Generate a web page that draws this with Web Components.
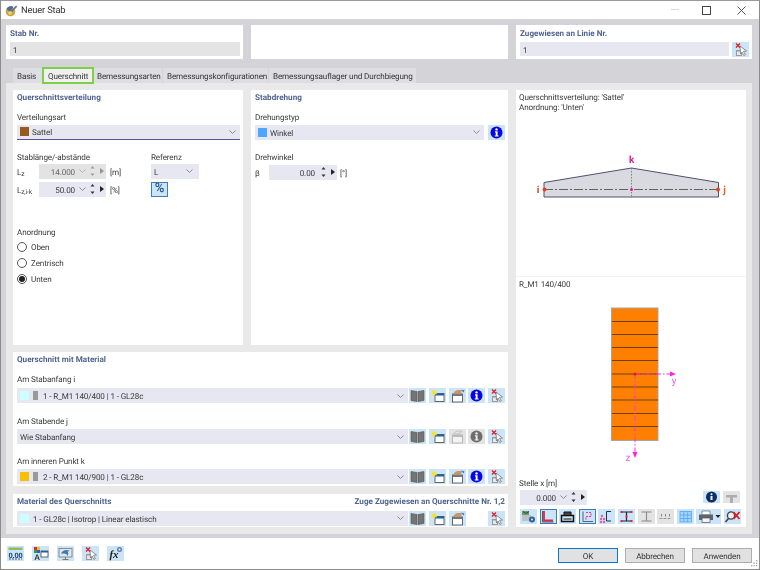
<!DOCTYPE html>
<html lang="de"><head><meta charset="utf-8"><title>Neuer Stab</title>
<style>
html,body{margin:0;padding:0;background:#fff}
body{font:8.1px/10px Roboto,"Noto Sans",sans-serif;letter-spacing:-.12px;text-rendering:geometricPrecision;color:#3a3a3a;width:760px;height:570px;overflow:hidden}
.cols{display:grid;grid-template-columns:134px 48px}
.line{display:flex;align-items:center;gap:4px;height:15px}
.line b{font-weight:400;width:18px;flex:none;white-space:nowrap;padding-top:1px}
.line>span{padding-top:1px}
sub{font-size:6.5px;line-height:0;vertical-align:-1px}
.swap{display:flex;gap:3px}
.swap rf-select{flex:1;min-width:0}
</style></head>
<body>
<rf-window>
  <rf-titlebar slot="title">Neuer Stab</rf-titlebar>

  <rf-panel slot="top" heading="Stab Nr." style="--pad:3px 3px 0 4px">
    <rf-field gray style="margin-top:4px">1</rf-field>
  </rf-panel>
  <rf-panel slot="top"></rf-panel>
  <rf-panel slot="top" heading="Zugewiesen an Linie Nr." style="--pad:3px 3px 0 4px">
    <div class="swap" style="margin-top:4px"><rf-field style="flex:1">1</rf-field><rf-icon name="pick"></rf-icon></div>
  </rf-panel>

  <rf-tab slot="tabs" style="width:29px;padding-left:4px">Basis</rf-tab>
  <rf-tab slot="tabs" active style="width:50px;padding-left:5px">Querschnitt</rf-tab>
  <rf-tab slot="tabs" style="width:68px;padding-left:3px">Bemessungsarten</rf-tab>
  <rf-tab slot="tabs" style="width:105px;padding-left:4px">Bemessungskonfigurationen</rf-tab>
  <rf-tab slot="tabs" style="width:147px;padding-left:4px">Bemessungsauflager und Durchbiegung</rf-tab>

  <rf-panel slot="a" heading="Querschnittsverteilung" style="--pad:2px 3px 0 4px">
    <rf-label style="margin-top:10px">Verteilungsart</rf-label>
    <rf-select underline style="margin-top:3px"><rf-swatch color="#96591f"></rf-swatch><span style="margin-left:3px">Sattel</span></rf-select>
    <div class="cols" style="margin-top:12px">
      <div>
        <rf-label>Stablänge/-abstände</rf-label>
        <div class="line" style="margin-top:2px"><b>L<sub>z</sub></b><rf-spin value="14.000" chevron disabled style="width:67px"></rf-spin><span>[m]</span></div>
        <div class="line" style="margin-top:3px"><b>L<sub>z,i-k</sub></b><rf-spin value="50.00" chevron style="width:67px"></rf-spin><span>[%]</span></div>
      </div>
      <div>
        <rf-label>Referenz</rf-label>
        <rf-select style="margin-top:2px;--chev:6px"><span>L</span></rf-select>
        <rf-percent style="margin-top:3px">%</rf-percent>
      </div>
    </div>
    <rf-label style="margin-top:30px">Anordnung</rf-label>
    <rf-radio style="margin-top:5px">Oben</rf-radio>
    <rf-radio style="margin-top:6px">Zentrisch</rf-radio>
    <rf-radio checked style="margin-top:6px">Unten</rf-radio>
  </rf-panel>

  <rf-panel slot="b" heading="Stabdrehung" style="--pad:2px 3px 0 4px">
    <rf-label style="margin-top:10px">Drehungstyp</rf-label>
    <div class="swap" style="margin-top:3px"><rf-select><rf-swatch color="#4ea5ff"></rf-swatch><span style="margin-left:3px">Winkel</span></rf-select><rf-icon name="info" style="margin-left:1px"></rf-icon></div>
    <rf-label style="margin-top:12px">Drehwinkel</rf-label>
    <div class="line" style="margin-top:3px;gap:0"><b style="width:14px">β</b><rf-spin value="0.00" style="width:68px"></rf-spin><span style="margin-left:3px">[°]</span></div>
  </rf-panel>

  <rf-panel slot="c" heading="Querschnitt mit Material" style="--pad:2px 3px 0 4px">
    <rf-label style="margin-top:10px">Am Stabanfang i</rf-label>
    <rf-sel-row style="margin-top:4px">
      <rf-swatch color="#ccffff"></rf-swatch><rf-swatch color="#9a9a9a" style="--w:5px;margin-left:4px"></rf-swatch><span style="margin-left:5px">1 - R_M1 140/400 | 1 - GL28c</span>
      <rf-icon slot="acts" name="book"></rf-icon><rf-icon slot="acts" name="new"></rf-icon><rf-icon slot="acts" name="edit"></rf-icon><rf-icon slot="acts" name="info"></rf-icon><rf-icon slot="acts" name="pick"></rf-icon>
    </rf-sel-row>
    <rf-label style="margin-top:13px">Am Stabende j</rf-label>
    <rf-sel-row style="margin-top:3px">
      <span>Wie Stabanfang</span>
      <rf-icon slot="acts" name="book"></rf-icon><rf-icon slot="acts" name="new"></rf-icon><rf-icon slot="acts" name="editoff" gray></rf-icon><rf-icon slot="acts" name="infooff" gray></rf-icon><rf-icon slot="acts" name="pick"></rf-icon>
    </rf-sel-row>
    <rf-label style="margin-top:12px">Am inneren Punkt k</rf-label>
    <rf-sel-row style="margin-top:3px">
      <rf-swatch color="#f8c000"></rf-swatch><rf-swatch color="#9a9a9a" style="--w:5px;margin-left:4px"></rf-swatch><span style="margin-left:5px">2 - R_M1 140/900 | 1 - GL28c</span>
      <rf-icon slot="acts" name="book"></rf-icon><rf-icon slot="acts" name="new"></rf-icon><rf-icon slot="acts" name="edit"></rf-icon><rf-icon slot="acts" name="info"></rf-icon><rf-icon slot="acts" name="pick"></rf-icon>
    </rf-sel-row>
  </rf-panel>

  <rf-panel slot="d" heading="Material des Querschnitts" note="Zuge Zugewiesen an Querschnitte Nr. 1,2" style="--pad:2px 3px 0 4px">
    <rf-sel-row style="margin-top:5px">
      <rf-swatch color="#ccffff"></rf-swatch><span style="margin-left:4px">1 - GL28c | Isotrop | Linear elastisch</span>
      <rf-icon slot="acts" name="book"></rf-icon><rf-icon slot="acts" name="new"></rf-icon><rf-icon slot="acts" name="edit"></rf-icon><rf-icon slot="acts" name="blank" clear></rf-icon><rf-icon slot="acts" name="pick"></rf-icon>
    </rf-sel-row>
  </rf-panel>

  <rf-preview slot="e"></rf-preview>

  <rf-icon slot="foot" name="zero"></rf-icon>
  <rf-icon slot="foot" name="colors"></rf-icon>
  <rf-icon slot="foot" name="monitor"></rf-icon>
  <rf-icon slot="foot" name="pick"></rf-icon>
  <rf-icon slot="foot" name="fx"></rf-icon>
  <rf-button slot="btn" primary>OK</rf-button>
  <rf-button slot="btn">Abbrechen</rf-button>
  <rf-button slot="btn">Anwenden</rf-button>
</rf-window>

<script>
const ICONS={
 pick:'<path d="M4 8h6v6H4z" fill="#9a9a9a"/><path d="M5 9.500h4V13H5z" fill="#e8e8e8"/><path d="M8 4l6.500 5-3 .3 1.800 3.400-1.500.8-1.700-3.400L8.500 12z" fill="#fff" stroke="#666" stroke-width=".7"/><path d="M4 1.500l4 4M8 1.500l-4 4" stroke="#e0202c" stroke-width="1.400"/>',
 info:'<circle cx="8.500" cy="7.500" r="6" fill="#0505e6"/><circle cx="8.500" cy="4.400" r="1.200" fill="#fff"/><path d="M7 6.300h2.600v4.200h1v1.100H6.700v-1.100h1V7.400H7z" fill="#fff"/>',
 infooff:'<circle cx="8.500" cy="7.500" r="6" fill="#6e6e6e"/><circle cx="8.500" cy="4.400" r="1.200" fill="#eee"/><path d="M7 6.300h2.600v4.200h1v1.100H6.700v-1.100h1V7.400H7z" fill="#eee"/>',
 book:'<path d="M2 2.500l6 1v10l-6-1z" fill="#747474" stroke="#555" stroke-width=".6"/><path d="M15 2.500l-6 1v10l6-1z" fill="#747474" stroke="#555" stroke-width=".6"/><path d="M8.500 3.500v10" stroke="#a8a8a8" stroke-width=".7"/>',
 new:'<rect x="6" y="5.500" width="9" height="8" fill="#fff" stroke="#444" stroke-width=".8"/><rect x="6" y="5.500" width="9" height="2" fill="#1f5f9e"/><path d="M4.500.8l1 2.200 2.300-.6-1 2.100 1.600 1.700-2.400.1-.9 2.200-1-2.200-2.400-.1 1.700-1.700-1-2.100 2.300.6z" fill="#f7e32a"/>',
 edit:'<rect x="3.500" y="6" width="10" height="8" fill="#fff" stroke="#444" stroke-width=".8"/><rect x="3.500" y="6" width="10" height="2" fill="#777"/><path d="M4.500 5.500c.5-2 2.500-3.500 5-3.500h3v2.500l-2.500 1.500h-4z" fill="#c89468"/><path d="M12 1.500l3.500 1-1 2z" fill="#2f78c8"/>',
 editoff:'<rect x="3.500" y="6" width="10" height="8" fill="#f4f4f4" stroke="#aaa" stroke-width=".8"/><rect x="3.500" y="6" width="10" height="2" fill="#bbb"/><path d="M4.500 5c1-2 3-3 5-3h3l-1 2-3 1z" fill="none" stroke="#bbb" stroke-width=".8"/>',
 blank:'',
 zero:'<rect x="1.500" y="1.500" width="14" height="2.500" fill="#8dbd5c"/><text x="8.500" y="11.500" font-family="Liberation Sans" font-size="7.500" font-weight="700" fill="#1a3d6b" text-anchor="middle">0.00</text><path d="M2 13h13" stroke="#1a3d6b" stroke-width=".8" stroke-dasharray="2 1"/>',
 colors:'<rect x="2" y="1" width="3" height="3" fill="#d92b2b"/><rect x="5" y="1" width="3" height="3" fill="#e9c31f"/><rect x="2" y="4" width="3" height="3" fill="#3a9b3a"/><rect x="5" y="4" width="3" height="3" fill="#2c5fc4"/><text x="5" y="14" font-family="Liberation Sans" font-size="8" font-weight="700" fill="#333" text-anchor="middle">A</text><rect x="9" y="5" width="7" height="6" fill="#fff" stroke="#345" stroke-width=".8"/><rect x="9" y="5" width="7" height="1.500" fill="#1f5f9e"/>',
 monitor:'<rect x="2" y="2.500" width="13" height="8.500" fill="#dfe7ee" stroke="#777" stroke-width=".8"/><path d="M5.500 13.500h6M8.500 11v2.500" stroke="#777"/><path d="M4 8c1-4 6-5 9-3l-2.500.5c1 1 1 3 0 4.500-.5-2-2.500-3-6.500-2z" fill="#3a7cb8"/>',
 fx:'<text x="7" y="12" font-family="Liberation Serif" font-size="11" font-style="italic" font-weight="700" fill="#222" text-anchor="middle">fx</text><circle cx="12.500" cy="3.500" r="2.500" fill="#5b7fb8"/><circle cx="12.500" cy="3.500" r="1" fill="#fff"/>',
 model:'<path d="M2 2h7v4H2z" fill="#6a9b62"/><path d="M2 6h9v6H2z" fill="#bcc2c9"/><path d="M3 2.500l3 2 3-2" stroke="#38503a" fill="none"/><circle cx="12" cy="10.500" r="3" fill="#2e5f96"/><circle cx="12" cy="10.500" r="1" fill="#cfe"/>',
 lred:'<path d="M4 2v9.500h9" fill="none" stroke="#e2254a" stroke-width="1.800"/><path d="M2.500 2v11h11" fill="none" stroke="#334" stroke-width=".8"/>',
 tray:'<path d="M2.500 6.500h12v6h-12z" fill="none" stroke="#111" stroke-width="1.500"/><path d="M5 6V3h7v3" fill="#444" stroke="#111"/><path d="M4.500 10h8" stroke="#111"/>',
 printer:'<path d="M6 2h8v4H6z" fill="#fff" stroke="#666" stroke-width=".7"/><path d="M3 5.500h14v5.500H3z" fill="#5d6670"/><path d="M6 9h8v4.500H6z" fill="#f4f4f4" stroke="#555" stroke-width=".7"/><path d="M19.500 6h5l-2.500 3z" fill="#222"/>',
 ldash:'<path d="M4 2.500v10h10" fill="none" stroke="#345" stroke-width=".8"/><path d="M7 3.500h5v4H7v4" fill="none" stroke="#e83a90" stroke-width="1.100" stroke-dasharray="2 1"/>',
 dots:'<path d="M13 2.500H8.500v9.500H13" fill="none" stroke="#234" stroke-width="1"/><g fill="#e060a0"><circle cx="4" cy="7" r="1.200"/><circle cx="3" cy="10" r="1.200"/><circle cx="6" cy="10" r="1.200"/><circle cx="3" cy="13" r="1.200"/><circle cx="6" cy="13" r="1.200"/></g>',
 ibeam:'<path d="M3.500 3h10M3.500 12h10M8.500 3v9" stroke="#223" stroke-width="1.200"/><g fill="#e2254a"><rect x="2.500" y="2" width="2" height="2"/><rect x="12.500" y="2" width="2" height="2"/><rect x="2.500" y="11" width="2" height="2"/><rect x="12.500" y="11" width="2" height="2"/><rect x="7.500" y="6.500" width="2" height="2"/></g>',
 ibeamoff:'<path d="M3.500 3h10M3.500 12h10M8.500 3v9" stroke="#8a8a8a" stroke-width="1.100"/>',
 dotsoff:'<path d="M2.500 9.500h12" stroke="#999" stroke-width="1.100" stroke-dasharray="3 1"/><g fill="#888"><rect x="4" y="5" width="1" height="2.500"/><rect x="8" y="5" width="1" height="2.500"/><rect x="12" y="5" width="1" height="2.500"/></g>',
 grid:'<rect x="3" y="2.500" width="11.500" height="10.500" fill="#a8d5fb" stroke="#4ea5ff" stroke-width=".8"/><path d="M3 6h11.500M3 9.500h11.500M6.800 2.500V13M10.700 2.500V13" stroke="#4ea5ff" stroke-width=".8"/>',
 search:'<circle cx="7" cy="6.500" r="3.600" fill="#e8f0f8" stroke="#444" stroke-width="1.300"/><path d="M4.500 9.500l-3 3.500" stroke="#444" stroke-width="1.600"/><path d="M9.500 3l6 7M15.500 3l-6 7" stroke="#e21c1c" stroke-width="1.800"/>',
 nail:'<path d="M3 4h11v2.500H10V13H7V6.500H3z" fill="#adadad"/>',
 iblack:'<circle cx="8.500" cy="6" r="5.500" fill="#0d2f66"/><circle cx="8.500" cy="3.300" r="1" fill="#fff"/><path d="M7.500 5h2v4h-2z" fill="#fff"/>'
};
function def(tag,render){
  customElements.define(tag,class extends HTMLElement{
    connectedCallback(){
      if(this.shadowRoot)return;
      this.attachShadow({mode:'open'}).innerHTML=render(this);
    }
  });
}
const chev='<svg width="7" height="4" viewBox="0 0 7 4"><path d="M.5.5l3 3 3-3" fill="none" stroke="#808088" stroke-width=".9"/></svg>';

def('rf-window',()=>`<style>
:host{display:flex;flex-direction:column;width:760px;height:570px;box-sizing:border-box;border:1px solid #8c8c8c;border-top-color:#9a9a9a;background:#fff;filter:blur(.3px)}
.body{flex:1;min-height:0;background:#d3d3d8;padding:6px 7px 0 5px;display:flex;flex-direction:column}
.top{display:grid;grid-template-columns:237px 257px 236px;column-gap:8px;height:34px}
.tabs{display:flex;gap:1px;margin-top:8.500px;height:15px;padding-left:7px;align-items:stretch}
.band{background:#e9e9e9;height:451px;box-sizing:border-box;padding:7px 6px 6px 7px;display:grid;grid-template-columns:230px 257px 230px;grid-template-rows:255px 134px 33px;gap:7.500px 8px}
.a{grid-area:1/1}.b{grid-area:1/2}.c{grid-area:2/1/3/3}.d{grid-area:3/1/4/3}.e{grid-area:1/3/4/4}
::slotted(*){min-width:0}
.foot{height:29px;flex:none;display:flex;align-items:center;padding:0 7px 2px 6px;position:relative}
.fi{display:flex;gap:8px;margin-top:1px}
.fb{display:flex;gap:7px;margin-left:auto;margin-top:5px}
.grip{position:absolute;right:1px;bottom:1px}
</style>
<slot name="title"></slot>
<div class="body">
 <div class="top"><slot name="top"></slot></div>
 <div class="tabs"><slot name="tabs"></slot></div>
 <div class="band">
  <div class="a" style="display:grid"><slot name="a"></slot></div>
  <div class="b" style="display:grid"><slot name="b"></slot></div>
  <div class="c" style="display:grid"><slot name="c"></slot></div>
  <div class="d" style="display:grid"><slot name="d"></slot></div>
  <div class="e" style="display:grid"><slot name="e"></slot></div>
 </div>
</div>
<div class="foot"><div class="fi"><slot name="foot"></slot></div><div class="fb"><slot name="btn"></slot></div>
<svg class="grip" width="9" height="9" viewBox="0 0 9 9" fill="#a8a8a8"><rect x="7" y="1" width="1.300" height="1.300"/><rect x="4.500" y="3.500" width="1.300" height="1.300"/><rect x="7" y="3.500" width="1.300" height="1.300"/><rect x="2" y="6" width="1.300" height="1.300"/><rect x="4.500" y="6" width="1.300" height="1.300"/><rect x="7" y="6" width="1.300" height="1.300"/></svg>
</div>`);

def('rf-titlebar',()=>`<style>
:host{display:flex;align-items:center;height:18px;flex:none;background:#fff;font-size:9.300px;letter-spacing:-.15px;color:#333;padding-left:4px}
.t{margin-left:3px;padding-top:2px}
.w{margin-left:auto;display:flex;align-items:center}
.w svg{display:block}
</style>
<svg width="13" height="13" viewBox="0 0 13 13"><circle cx="5.500" cy="7.500" r="4.800" fill="#c9a640"/><path d="M1.500 5a4.800 4.800 0 0 1 7-2.200L5 8z" fill="#4d6f96"/><path d="M6 7l5-5.500 1.200 1.200L7 8z" fill="#5b6f8c"/><circle cx="5" cy="9" r="1.800" fill="#e8d78a"/></svg>
<span class="t"><slot></slot></span>
<span class="w">
<svg width="8" height="2" style="margin-right:23px"><rect width="8" height="1" fill="#d8d8d8"/></svg>
<svg width="9" height="9" style="margin-right:26px"><rect x=".5" y=".5" width="8" height="8" fill="none" stroke="#444"/></svg>
<svg width="9" height="9" style="margin-right:13px"><path d="M.5.5l8 8M8.500.5l-8 8" stroke="#444" fill="none" stroke-width=".9"/></svg>
</span>`);

def('rf-panel',h=>{
 const hd=h.getAttribute('heading'),n=h.getAttribute('note');
 return `<style>
:host{display:block;background:#fff;box-sizing:border-box;padding:var(--pad,0);min-width:0}
.h{display:flex;justify-content:space-between;font-weight:700;letter-spacing:.02px;color:#4f6490;height:10px;line-height:10px;white-space:nowrap}
</style>${hd?`<div class="h"><span>${hd}</span>${n?`<span>${n}</span>`:''}</div>`:''}<slot></slot>`;
});

def('rf-label',()=>`<style>:host{display:block;height:10px;line-height:10px;white-space:nowrap}</style><slot></slot>`);

def('rf-field',h=>`<style>:host{display:block;height:14px;line-height:16px;box-sizing:border-box;padding-left:3px;background:${h.hasAttribute('gray')?'#e4e4e4':'#e6e7f1'}}</style><slot></slot>`);

def('rf-tab',h=>`<style>
:host{display:flex;align-items:center;white-space:nowrap;box-sizing:border-box;padding-top:2.500px;background:#dedee2;color:#333;${h.hasAttribute('active')?'background:#f0f0f0;outline:2px solid #7ed04b;outline-offset:-1px;z-index:1;':''}}
</style><slot></slot>`);

def('rf-select',h=>`<style>
:host{display:flex;align-items:center;height:15px;box-sizing:border-box;background:#e6e7f1;padding:1px var(--chev,4px) 0 3px;white-space:nowrap;min-width:0;${h.hasAttribute('underline')?'border-bottom:1px solid #55559a;':''}}
.c{margin-left:auto;display:flex;align-items:center;margin-top:-1px}
</style><slot></slot><span class="c">${chev}</span>`);

def('rf-sel-row',()=>`<style>
:host{display:flex;height:15px}
rf-select{flex:1;min-width:0}
.a{display:flex;gap:2.750px;margin-left:1.500px}
</style><rf-select><slot></slot></rf-select><span class="a"><slot name="acts"></slot></span>`);

def('rf-swatch',h=>`<style>:host{display:inline-block;flex:none;margin-top:-1px;width:var(--w,9px);height:9px;background:${h.getAttribute('color')}}</style>`);

def('rf-spin',h=>{
 const d=h.hasAttribute('disabled'),c=h.hasAttribute('chevron');
 return `<style>
:host{display:flex;align-items:center;height:15px;flex:none;background:${d?'#e3e3e3':'#e6e7f1'};color:${d?'#666':'#3a3a3a'};box-sizing:border-box}
.v{flex:1;text-align:right;padding-top:1px}
.c{margin-left:4px;display:flex;opacity:${d?.55:1}}
svg{display:block}
</style><span class="v">${h.getAttribute('value')}</span>${c?`<span class="c">${chev}</span>`:''}
<svg style="margin:0 5px 0 ${c?4:6}px;opacity:${d?.4:1}" width="5" height="10" viewBox="0 0 5 10" fill="#333"><path d="M2.500 0l2 2.500h-4zM2.500 10l2-2.500h-4z"/></svg>
<svg style="margin-right:2px;opacity:${d?.4:1}" width="4" height="6" viewBox="0 0 4 6" fill="#222"><path d="M0 0l4 3-4 3z"/></svg>`;
});

def('rf-percent',()=>`<style>:host{display:flex;align-items:center;justify-content:center;width:17px;height:15px;box-sizing:border-box;background:#cce4f7;border:1px solid #3b7db8;color:#1d5488;font-weight:500;font-size:13px}</style><slot></slot>`);

def('rf-radio',h=>`<style>
:host{display:flex;align-items:center;gap:4px;height:10px;line-height:10px}
i{width:10px;height:10px;box-sizing:border-box;border-radius:50%;border:1px solid #555;background:#fff;display:flex;align-items:center;justify-content:center;flex:none}
b{width:6px;height:6px;border-radius:50%;background:#222}
.x{padding-top:1.500px}
</style><i>${h.hasAttribute('checked')?'<b></b>':''}</i><span class="x"><slot></slot></span>`);

def('rf-icon',h=>{
 const g=h.hasAttribute('gray'),c=h.hasAttribute('clear'),br=h.hasAttribute('framed'),w=h.getAttribute('w')||17;
 return `<style>
:host{display:inline-block;flex:none;width:${w}px;height:15px;box-sizing:border-box;overflow:hidden;background:${c?'transparent':g?'#e3e3e3':'#cce4f7'};${br?'outline:1px solid #3b7db8;outline-offset:-1px;':''}}
svg{display:block}
</style><svg width="${w}" height="15" viewBox="0 0 ${w} 15">${ICONS[h.getAttribute('name')]||''}</svg>`;
});

def('rf-button',h=>`<style>
:host{display:flex;align-items:center;justify-content:center;width:60px;height:15px;box-sizing:border-box;padding-top:1px;background:#e1e1e1;border:1px solid ${h.hasAttribute('primary')?'#0078d7':'#adadad'};color:#333}
</style><slot></slot>`);

def('rf-preview',()=>`<style>
:host{display:flex;flex-direction:column;background:#fff;box-sizing:border-box;padding:2px 3px 0 3px;min-height:0}
.t{height:10px;line-height:10px;white-space:nowrap}
svg{display:block}
.d1{margin:0 -3px;flex:none}
.d2{margin:0 -3px;flex:none;border-top:1px solid #f3f3f3}
.r{display:flex;align-items:center;height:15px;padding-left:1px}
.tb{display:flex;gap:2.600px;height:15px;margin-top:4.500px;padding-left:1px}
.ib{display:flex;gap:3px;margin-left:auto;margin-right:3px;align-items:center}
.ib rf-icon{height:12px}
</style>
<div class="t">Querschnittsverteilung: 'Sattel'</div>
<div class="t">Anordnung: 'Unten'</div>
<svg class="d1" width="230" height="164" viewBox="516 112 230 164" font-family="Roboto" font-weight="700" font-size="10">
 <path d="M544 182.500L631.500 168l87 14.500V197H544z" fill="#d9d9e0" stroke="#50506e" stroke-width="1"/>
 <path d="M544 189.500h175" stroke="#555" stroke-width=".9" stroke-dasharray="9 2 2 2"/>
 <path d="M631.500 168v29" stroke="#777" stroke-width=".9" stroke-dasharray="1.500 1.500"/>
 <circle cx="544.500" cy="189.500" r="1.900" fill="#e0401a"/><circle cx="718" cy="189.500" r="1.900" fill="#e0401a"/><circle cx="631.500" cy="189.500" r="1.500" fill="#e8188a"/>
 <text x="631.500" y="163" text-anchor="middle" fill="#e8188a">k</text>
 <text x="538" y="193" text-anchor="middle" fill="#e0401a">i</text>
 <text x="724.500" y="193" text-anchor="middle" fill="#e0601a">j</text>
</svg>
<div class="d2"></div>
<div class="t" style="margin-top:2px">R_M1 140/400</div>
<svg class="d1" width="230" height="176" viewBox="516 288 230 176" font-family="Roboto" font-size="10">
 <rect x="611.500" y="307" width="46.500" height="132.500" fill="#ff8000" stroke="#a5a5a5"/>
 <path d="M612 320.500h46M612 333.500h46M612 346.500h46M612 359.500h46M612 373h46M612 386h46M612 399h46M612 412.500h46M612 425.500h46" stroke="#6e3d10"/>
 <path d="M635 373h36M635 373v81" stroke="#ff30e0" stroke-width="1" stroke-dasharray="5 2 1.500 2"/>
 <path d="M670 370.500l6 2.500-6 2.500zM632.500 451l2.500 6 2.500-6z" fill="#ff20e0"/>
 <circle cx="635" cy="373" r="1.500" fill="#f01020"/>
 <text x="674" y="383" text-anchor="middle" fill="#f060e0">y</text>
 <text x="628" y="460" text-anchor="middle" fill="#f060e0">z</text>
</svg>
<div class="t" style="margin-top:13px">Stelle x [m]</div>
<div class="r" style="margin-top:2px">
 <rf-spin value="0.000" chevron style="width:67px"></rf-spin>
 <span class="ib"><rf-icon name="iblack"></rf-icon><rf-icon name="nail" gray></rf-icon></span>
</div>
<div class="tb">
<rf-icon name="model"></rf-icon><rf-icon name="lred" framed></rf-icon><rf-icon name="tray"></rf-icon><rf-icon name="ldash" framed></rf-icon><rf-icon name="dots"></rf-icon><rf-icon name="ibeam"></rf-icon><rf-icon name="ibeamoff" gray></rf-icon><rf-icon name="dotsoff" gray></rf-icon><rf-icon name="grid"></rf-icon><rf-icon name="printer" w="25"></rf-icon><rf-icon name="search"></rf-icon>
</div>`);
</script>
</body></html>
